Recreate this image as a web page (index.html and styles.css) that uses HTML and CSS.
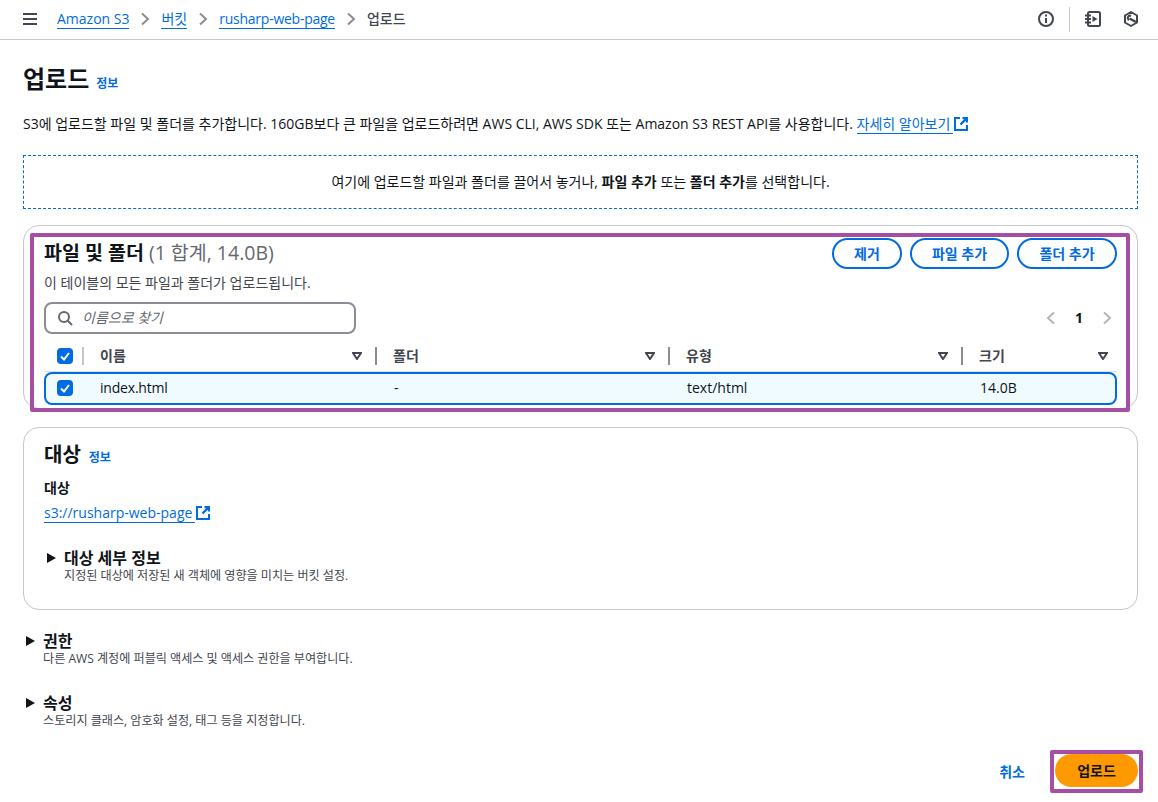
FILE: index.html
```html
<!DOCTYPE html>
<html lang="ko">
<head>
<meta charset="utf-8">
<title>업로드</title>
<link rel="stylesheet" href="styles.css">
</head>
<body>
<header class="topbar">
  <svg class="menu" width="16" height="14" viewBox="0 0 16 14"><path d="M1 2h14M1 7h14M1 12h14" fill="none" stroke="#424650" stroke-width="2"/></svg>
  <nav class="crumbs">
    <a class="link">Amazon S3</a>
    <svg class="sep" width="10" height="14" viewBox="0 0 10 14"><path d="M2 1.500l6 5.500-6 5.500" fill="none" stroke="#8c8c94" stroke-width="2"/></svg>
    <a class="link">버킷</a>
    <svg class="sep" width="10" height="14" viewBox="0 0 10 14"><path d="M2 1.500l6 5.500-6 5.500" fill="none" stroke="#8c8c94" stroke-width="2"/></svg>
    <a class="link tight">rusharp-web-page</a>
    <svg class="sep" width="10" height="14" viewBox="0 0 10 14"><path d="M2 1.500l6 5.500-6 5.500" fill="none" stroke="#8c8c94" stroke-width="2"/></svg>
    <span class="current">업로드</span>
  </nav>
  <div class="tools">
    <svg width="16" height="16" viewBox="0 0 16 16"><circle cx="8" cy="8" r="7" fill="none" stroke="#424650" stroke-width="2"/><path d="M8 7v5M8 3.500v2" fill="none" stroke="#424650" stroke-width="2"/></svg>
    <span class="vline"></span>
    <svg class="tool-book" width="16" height="16" viewBox="0 0 16 16"><rect x="3" y="1" width="12" height="14" rx="1.500" fill="none" stroke="#424650" stroke-width="2"/><path d="M0 4.500h6M0 8h6M0 11.500h6" fill="none" stroke="#424650" stroke-width="2"/><path d="M7.500 5l5 3-5 3z" fill="#424650"/></svg>
    <svg class="tool-hex" width="16" height="16" viewBox="0 0 16 16"><path d="M8 1l6 3.500v7L8 15l-6-3.500v-7z" fill="none" stroke="#424650" stroke-width="2" stroke-linejoin="round"/><path d="M6 9a2.200 2.200 0 1 1 2-4" fill="none" stroke="#424650" stroke-width="2"/><path d="M6.500 7.500l6.500 3.500" fill="none" stroke="#424650" stroke-width="2.500"/></svg>
  </div>
</header>

<main class="page">
  <div class="title-row">
    <h1>업로드</h1>
    <a class="info">정보</a>
  </div>
  <p class="lead">S3에 업로드할 파일 및 폴더를 추가합니다. 160GB보다 큰 파일을 업로드하려면 AWS CLI, AWS SDK 또는 Amazon S3 REST API를 사용합니다. <a class="link link-ext">자세히 알아보기</a><svg class="ext" width="14" height="14" viewBox="0 0 14 14"><path d="M6 1H1v12h12V8" fill="none" stroke="#006ce0" stroke-width="2"/><path d="M8.500 1H13v4.500M13 1L6.500 7.500" fill="none" stroke="#006ce0" stroke-width="2.400"/></svg></p>
  <div class="dropzone">여기에 업로드할 파일과 폴더를 끌어서 놓거나, <b>파일 추가</b> 또는 <b>폴더 추가</b>를 선택합니다.</div>

  <section class="panel files">
    <div class="files-head">
      <div>
        <h2 class="files-title">파일 및 폴더 <span class="count">(1 합계, 14.0B)</span></h2>
        <p class="desc">이 테이블의 모든 파일과 폴더가 업로드됩니다.</p>
      </div>
      <div class="actions">
        <button class="btn btn-remove">제거</button>
        <button class="btn btn-file">파일 추가</button>
        <button class="btn btn-folder">폴더 추가</button>
      </div>
    </div>
    <div class="filter-row">
      <div class="search">
        <svg width="16" height="16" viewBox="0 0 16 16"><circle cx="7" cy="7" r="5" fill="none" stroke="#656871" stroke-width="2"/><path d="M10.500 10.500L15 15" fill="none" stroke="#656871" stroke-width="2"/></svg>
        <span>이름으로 찾기</span>
      </div>
      <div class="pager">
        <svg width="10" height="14" viewBox="0 0 10 14"><path d="M8 1.500L2 7l6 5.500" fill="none" stroke="#b4b4bb" stroke-width="2"/></svg>
        <b>1</b>
        <svg width="10" height="14" viewBox="0 0 10 14"><path d="M2 1.500L8 7l-6 5.500" fill="none" stroke="#b4b4bb" stroke-width="2"/></svg>
      </div>
    </div>
    <div class="thead grid-row">
      <div class="c-check"><span class="check"><svg width="12" height="12" viewBox="0 0 12 12"><path d="M2 6.500L5 9.500 10 3" fill="none" stroke="#fff" stroke-width="2"/></svg></span><i class="bar bar-light"></i></div>
      <div class="c-name th">이름<svg class="sort" width="10" height="8" viewBox="0 0 10 8"><path d="M1 1h8L5 7z" fill="none" stroke="#424650" stroke-width="2"/></svg></div>
      <div class="c th"><i class="bar"></i>폴더<svg class="sort" width="10" height="8" viewBox="0 0 10 8"><path d="M1 1h8L5 7z" fill="none" stroke="#424650" stroke-width="2"/></svg></div>
      <div class="c th"><i class="bar"></i>유형<svg class="sort" width="10" height="8" viewBox="0 0 10 8"><path d="M1 1h8L5 7z" fill="none" stroke="#424650" stroke-width="2"/></svg></div>
      <div class="c th th-last"><i class="bar"></i>크기<svg class="sort" width="10" height="8" viewBox="0 0 10 8"><path d="M1 1h8L5 7z" fill="none" stroke="#424650" stroke-width="2"/></svg></div>
    </div>
    <div class="tr grid-row">
      <div class="c-check"><span class="check"><svg width="12" height="12" viewBox="0 0 12 12"><path d="M2 6.500L5 9.500 10 3" fill="none" stroke="#fff" stroke-width="2"/></svg></span></div>
      <div class="c-name tight-sm">index.html</div>
      <div class="c">-</div>
      <div class="c">text/html</div>
      <div class="c">14.0B</div>
    </div>
    <div class="mark mark-files"></div>
  </section>

  <section class="panel dest">
    <div class="title-row-sm"><h2>대상</h2><a class="info">정보</a></div>
    <h3>대상</h3>
    <p class="dest-link"><a class="link link-ext">s3://rusharp-web-page</a><svg class="ext" width="14" height="14" viewBox="0 0 14 14"><path d="M6 1H1v12h12V8" fill="none" stroke="#006ce0" stroke-width="2"/><path d="M8.500 1H13v4.500M13 1L6.500 7.500" fill="none" stroke="#006ce0" stroke-width="2.400"/></svg></p>
    <div class="expander">
      <span class="caret"></span>
      <div><h4>대상 세부 정보</h4><p>지정된 대상에 저장된 새 객체에 영향을 미치는 버킷 설정.</p></div>
    </div>
  </section>

  <div class="expander outer">
    <span class="caret"></span>
    <div><h4>권한</h4><p>다른 AWS 계정에 퍼블릭 액세스 및 액세스 권한을 부여합니다.</p></div>
  </div>
  <div class="expander outer outer-2">
    <span class="caret"></span>
    <div><h4>속성</h4><p>스토리지 클래스, 암호화 설정, 태그 등을 지정합니다.</p></div>
  </div>

  <div class="footer">
    <a class="cancel">취소</a>
    <div class="upload-wrap"><button class="upload">업로드</button></div>
  </div>
</main>
</body>
</html>
```
FILE: styles.css
```css
* { box-sizing: border-box; }
html, body { margin: 0; padding: 0; }
body {
  font-family: "Open Sans", "Noto Sans CJK KR", sans-serif;
  font-size: 14px;
  line-height: 20px;
  color: #0f141a;
  background: #fff;
  width: 1158px;
  height: 802px;
  overflow: hidden;
}
h1, h2, h3, h4, p { margin: 0; }
a { color: #006ce0; }
.link { color: #006ce0; border-bottom: 1px solid #006ce0; }
.link-ext { padding-right: 3px; }
.tight { letter-spacing: -0.25px; }
.tight-sm { letter-spacing: -0.2px; }

.topbar {
  height: 40px;
  border-bottom: 1px solid #c6c6cd;
  display: flex;
  align-items: center;
  padding: 0 19px 1px 22px;
}
.menu { margin-right: 19px; }
.crumbs { display: flex; align-items: center; gap: 11px; font-size: 14px; line-height: 18px; }
.current { color: #424650; font-weight: 500; }
.tools { margin-left: auto; display: flex; align-items: center; }
.vline { width: 1px; height: 25px; background: #c6c6cd; margin: 0 15px; }
.tool-hex { margin-left: 22px; }

.page { padding: 0 20px 0 23px; }
.title-row { display: flex; align-items: baseline; gap: 7px; padding-top: 24px; }
h1 { font-size: 24px; line-height: 30px; font-weight: 700; }
.info { font-size: 12px; line-height: 16px; font-weight: 700; }
.lead { margin-top: 20px; line-height: 20px; white-space: nowrap; }
.ext { vertical-align: -2px; margin-left: 1px; }

.dropzone {
  margin-top: 21px;
  height: 54px;
  border: 1px dashed #006ce0;
  display: flex;
  align-items: center;
  justify-content: center;
  white-space: pre-wrap;
  color: #0f141a;
}
.panel {
  border: 1px solid #c6c6cd;
  border-radius: 16px;
  position: relative;
}
.files { margin-top: 16px; height: 184px; padding: 11px 20px 0 20px; }
.files-head { display: flex; justify-content: space-between; }
h2 { font-size: 20px; line-height: 32px; font-weight: 700; }
.files-title { font-size: 19.5px; }
.count { font-weight: 400; color: #656871; }
.desc { line-height: 18px; color: #424650; margin-top: 5px; }
.actions { display: flex; gap: 8px; padding-top: 1px; }
.btn {
  height: 31px;
  border: 2px solid #006ce0;
  border-radius: 16px;
  background: #fff;
  color: #006ce0;
  font: 700 14px/1 "Open Sans", "Noto Sans CJK KR", sans-serif;
  padding: 0;
}
.btn-remove { width: 70px; }
.btn-file { width: 99px; }
.btn-folder { width: 100px; }
.filter-row { display: flex; justify-content: space-between; align-items: center; margin-top: 10px; }
.search {
  width: 312px;
  height: 32px;
  border: 2px solid #8c8c94;
  border-radius: 8px;
  display: flex;
  align-items: center;
  gap: 9px;
  padding-left: 11px;
  font-style: italic;
  color: #656871;
}
.pager { display: flex; align-items: center; gap: 19px; padding-right: 5px; }
.grid-row {
  display: grid;
  grid-template-columns: 40px 292px 293px 293px 1fr;
  align-items: center;
}
.thead { height: 32px; margin-top: 6px; border-bottom: 1px solid #dedee3; font-weight: 700; color: #424650; }
.c-check { padding-left: 13px; display: flex; align-items: center; position: relative; }
.check {
  width: 16px; height: 16px;
  background: #006ce0;
  border-radius: 4px;
  display: flex; align-items: center; justify-content: center;
}
.bar { width: 2px; height: 18px; background: #8c8c94; display: block; }
.bar-light { background: #c6c6cd; margin-left: 9px; }
.th { display: flex; align-items: center; position: relative; }
.th .bar { position: absolute; left: -1px; top: 1px; }
.c-name { padding-left: 16px; }
.c { padding-left: 17px; }
.sort { position: absolute; right: 14px; top: 6px; }
.th-last .sort { right: 9px; }
.tr {
  height: 33px;
  background: #f0fbff;
  border: 2px solid #006ce0;
  border-radius: 8px;
  line-height: 18px;
  padding-bottom: 1px;
}
.tr .c-check { padding-left: 11px; }
.tr .c-name { padding-left: 14px; }
.tr .c { padding-left: 16px; }
.mark {
  position: absolute;
  border: 4px solid #a44ea4;
  border-radius: 2px;
  pointer-events: none;
}
.mark-files { left: 6px; top: 7px; width: 1100px; height: 179px; }

.dest { margin-top: 18px; height: 183px; padding: 11px 20px 0 20px; }
.title-row-sm { display: flex; align-items: baseline; gap: 8px; }
h3 { font-size: 14px; line-height: 18px; font-weight: 700; margin-top: 8px; }
.dest-link { margin-top: 6px; line-height: 20px; }
.expander { display: flex; gap: 8px; margin-top: 25px; padding-left: 3px; }
.caret {
  width: 0; height: 0;
  border-left: 9px solid #0f141a;
  border-top: 5.5px solid transparent;
  border-bottom: 5.5px solid transparent;
  margin-top: 5px;
  flex: none;
}
.expander h4 { font-size: 16px; line-height: 20px; font-weight: 700; }
.expander p { font-size: 12.1px; line-height: 14px; color: #424650; margin-top: 1px; }
.outer { margin-top: 21px; }
.outer-2 { margin-top: 27px; }
.footer { display: flex; justify-content: flex-end; align-items: center; gap: 25px; margin-top: 22px; }
.cancel { font-weight: 700; color: #006ce0; }
.upload-wrap { border: 4px solid #a44ea4; border-radius: 2px; padding: 0 1px; width: 93px; height: 43px; margin-right: -5px; }
.upload {
  display: block;
  width: 83px; height: 33px;
  background: #ff9900;
  border: 0;
  border-radius: 17px;
  color: #0f141a;
  font: 700 14px/1 "Open Sans", "Noto Sans CJK KR", sans-serif;
  padding: 0;
}
```
